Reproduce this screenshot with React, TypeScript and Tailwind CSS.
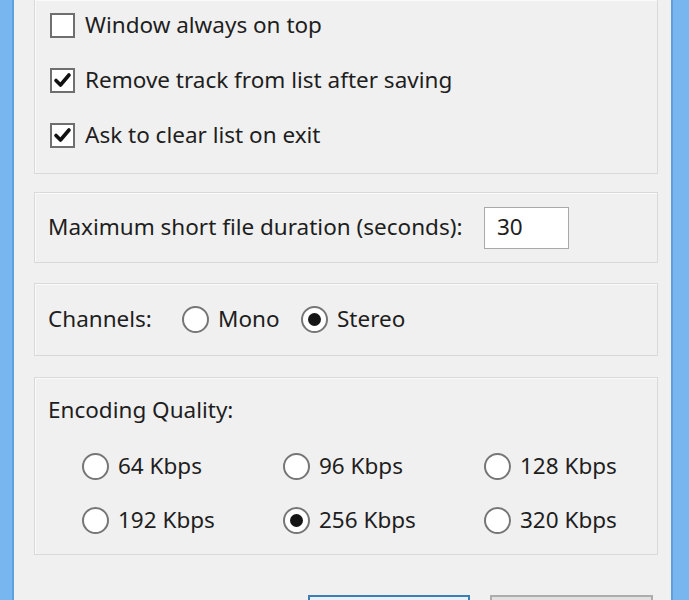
import React from 'react';

const Check = ({ checked }: { checked: boolean }) => (
  <div className="w-[25px] h-[25px] shrink-0 border-2 border-[#6f6f6f] bg-white flex items-center justify-center">
    {checked && (
      <svg width="19" height="19" viewBox="0 0 19 19">
        <path d="M3 9.5 L7.5 14 L16 4" fill="none" stroke="#111" strokeWidth="3.6" strokeLinecap="round" strokeLinejoin="round" />
      </svg>
    )}
  </div>
);

const Radio = ({ checked }: { checked?: boolean }) => (
  <div className="w-[27px] h-[27px] shrink-0 rounded-full border-2 border-[#767676] bg-white flex items-center justify-center">
    {checked && <div className="w-[13px] h-[13px] rounded-full bg-[#151515]" />}
  </div>
);

const Group = ({ className, children }: { className: string; children: React.ReactNode }) => (
  <div className={`shrink-0 border border-[#d9d9d9] shadow-[inset_1px_1px_0_#fafafa] ${className}`}>{children}</div>
);

const rates = ['64 Kbps', '96 Kbps', '128 Kbps', '192 Kbps', '256 Kbps', '320 Kbps'];

const App: React.FC = () => {
  return (
    <div className="w-[689px] h-[600px] overflow-hidden bg-[#78b6f0] pl-[12px] pr-[16px]">
      <div
        className="h-[600px] overflow-hidden flex flex-col bg-[#f0f0f0] border-x-2 border-[#5f9fdc] pl-[20px] pr-[13px] text-[22.5px] text-[#1e1e1e] leading-none"
        style={{ fontFamily: '"Noto Sans", "Open Sans", sans-serif' }}
      >
        <Group className="h-[174px] border-t-0 pt-[12px] pl-[15px] flex flex-col gap-[29px]">
          <label className="flex items-center gap-[10px] h-[26px]">
            <Check checked={false} />
            <span>Window always on top</span>
          </label>
          <label className="flex items-center gap-[10px] h-[26px]">
            <Check checked />
            <span>Remove track from list after saving</span>
          </label>
          <label className="flex items-center gap-[10px] h-[26px]">
            <Check checked />
            <span>Ask to clear list on exit</span>
          </label>
        </Group>

        <Group className="mt-[18px] h-[71px] pl-[13px] flex items-center">
          <span className="w-[436px] shrink-0">Maximum short file duration (seconds):</span>
          <div className="w-[85px] h-[42px] bg-white border border-[#a9a9a9] flex items-center pl-[12px]">30</div>
        </Group>

        <Group className="mt-[20px] h-[73px] pl-[13px] flex items-center">
          <span className="w-[134px] shrink-0">Channels:</span>
          <div className="w-[119px] flex items-center gap-[9px]">
            <Radio />
            <span>Mono</span>
          </div>
          <div className="flex items-center gap-[9px]">
            <Radio checked />
            <span>Stereo</span>
          </div>
        </Group>

        <Group className="mt-[21px] h-[178px] pl-[13px] pt-[21px]">
          <div>Encoding Quality:</div>
          <div className="mt-[31px] pl-[34px] grid grid-cols-[201px_201px_1fr] gap-y-[27px]">
            {rates.map((r) => (
              <div key={r} className="flex items-center gap-[9px]">
                <Radio checked={r === '256 Kbps'} />
                <span>{r}</span>
              </div>
            ))}
          </div>
        </Group>

        <div className="shrink-0 mt-[40px] flex justify-end gap-[20px] pr-[5px]">
          <div className="w-[162px] h-[5px] shrink-0 border-2 border-b-0 border-[#3c7fb1] bg-[#e5f1fb]" />
          <div className="w-[163px] h-[5px] shrink-0 border-2 border-b-0 border-[#adadad] bg-[#e1e1e1]" />
        </div>
      </div>
    </div>
  );
};

export default App;
